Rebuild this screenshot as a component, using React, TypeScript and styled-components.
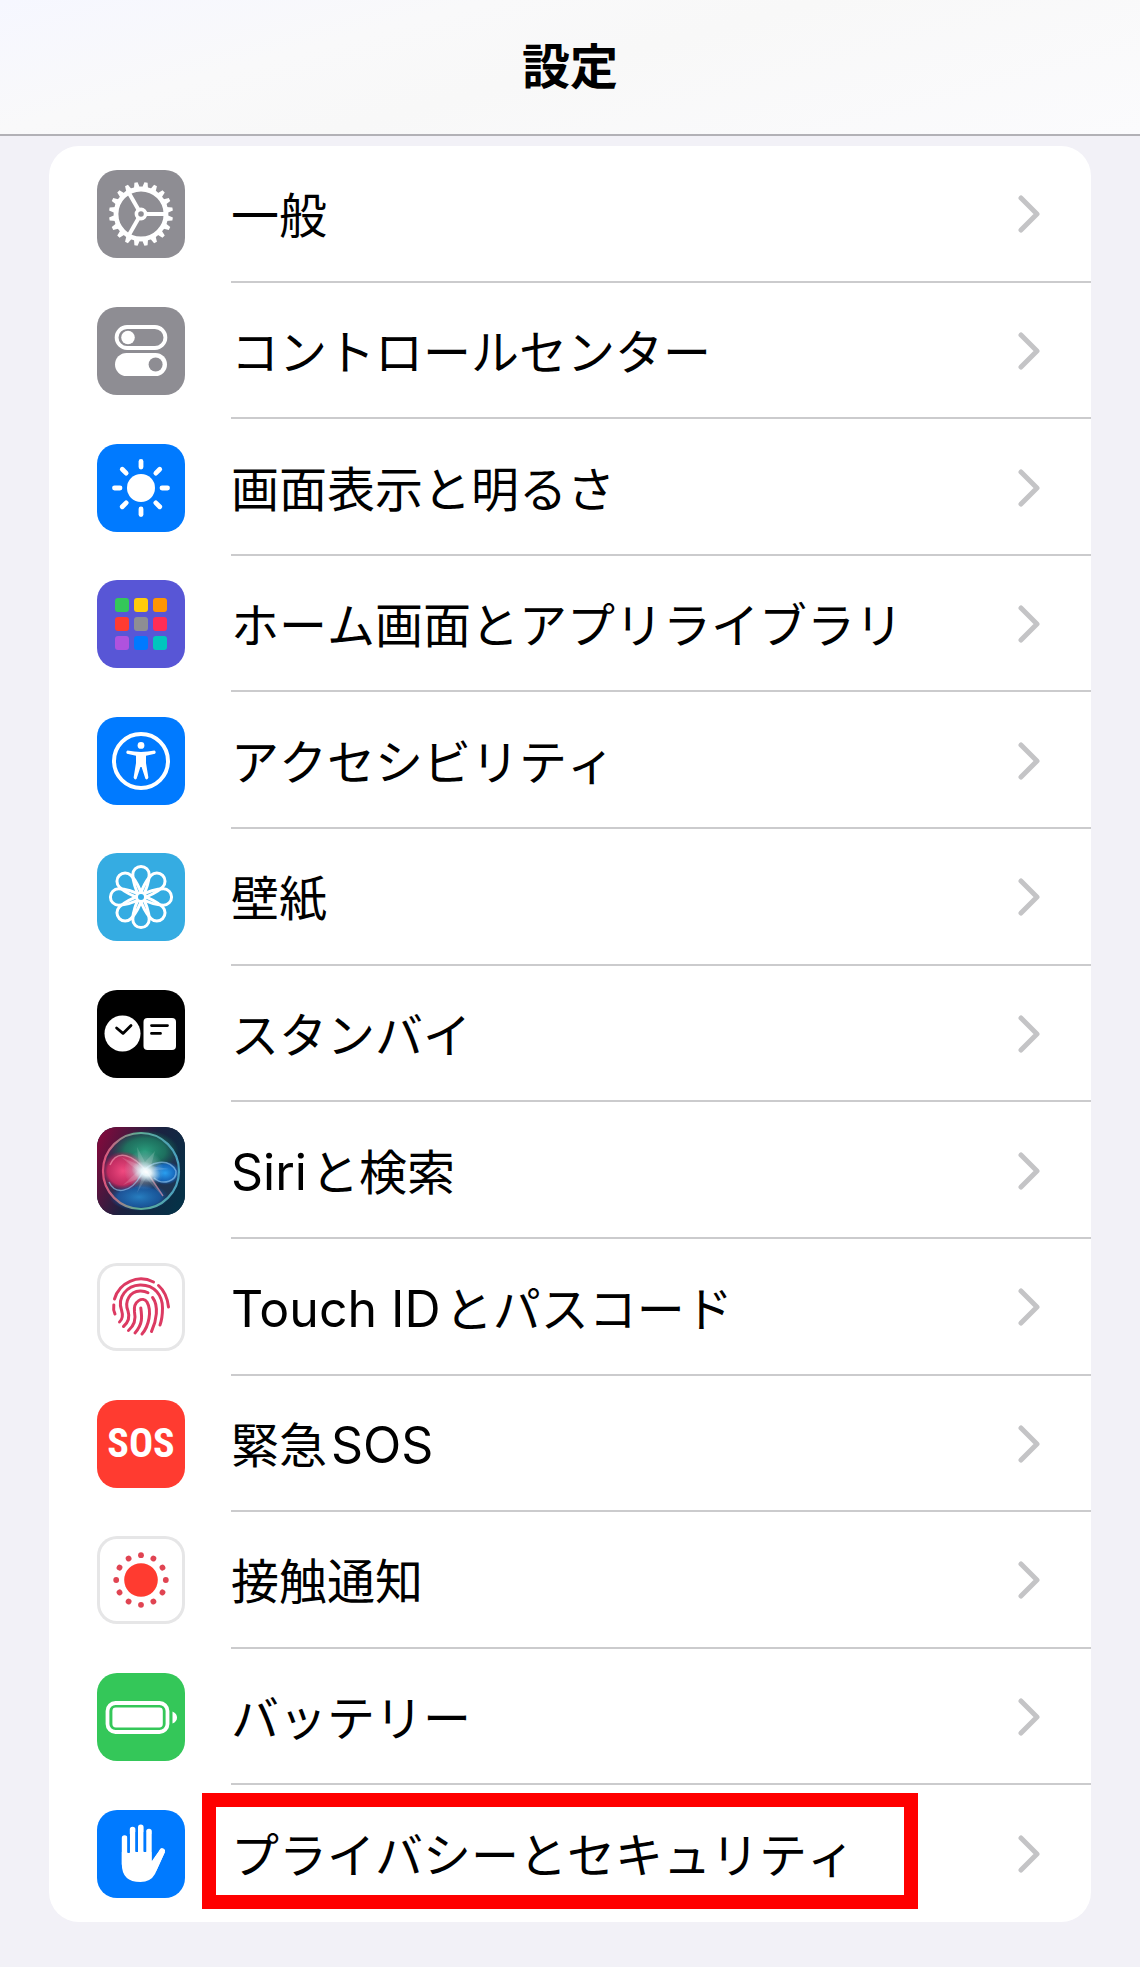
import React from "react";
import styled, { createGlobalStyle, css } from "styled-components";

const GlobalStyle = createGlobalStyle`
  *, *::before, *::after { box-sizing: border-box; }
  body {
    margin: 0;
    background: #f2f1f7;
    color: #000;
    font-family: Inter, "Noto Sans CJK JP", sans-serif;
  }
`;

const Page = styled.div`
  min-height: 100vh;
  display: flex;
  flex-direction: column;
`;

const Header = styled.header`
  height: 136px;
  display: flex;
  align-items: center;
  justify-content: center;
  border-bottom: 2px solid #b2b1b6;
  background: linear-gradient(165deg, #f6f7ff 0%, #f9f9fa 30%, #f8f8f8 50%, #fbfbfd 100%);
`;

const Title = styled.h1`
  margin: 0;
  font-size: 48px;
  line-height: 56px;
  font-weight: 700;
`;

const Main = styled.main`
  flex: 1;
  display: flex;
  padding: 10px 49px 45px;
`;

const Card = styled.ul`
  flex: 1;
  margin: 0;
  padding: 0;
  list-style: none;
  display: grid;
  grid-auto-rows: 1fr;
  border-radius: 30px;
  background: #fff;
`;

const Item = styled.li`
  display: flex;
`;

const RowLink = styled.a`
  flex: 1;
  display: flex;
  align-items: stretch;
  gap: 46px;
  padding-left: 48px;
  color: inherit;
  text-decoration: none;
`;

const Tile = styled.span<{ $bg: string; $outlined?: boolean }>`
  align-self: center;
  flex: none;
  display: flex;
  align-items: center;
  justify-content: center;
  width: 88px;
  height: 88px;
  border-radius: 20px;
  overflow: hidden;
  background: ${(p) => p.$bg};
  ${(p) =>
    p.$outlined &&
    css`
      box-shadow: inset 0 0 0 3px #e6e6e7;
    `}
  svg {
    display: block;
  }
`;

const SosText = styled.span`
  color: #fff;
  font-family: "Roboto Condensed", "Liberation Sans Narrow", Roboto, sans-serif;
  font-size: 40px;
  font-weight: 700;
  line-height: 48px;
`;

const Body = styled.span<{ $last: boolean }>`
  flex: 1;
  display: flex;
  align-items: center;
  justify-content: space-between;
  padding-right: 50px;
  border-bottom: 2px solid ${(p) => (p.$last ? "transparent" : "#cbcbcd")};
`;

const Label = styled.span`
  position: relative;
  padding-top: 6px;
  font-size: 48px;
  line-height: 64px;
  font-weight: 400;
  font-kerning: none;
  white-space: nowrap;
`;

const Latin = styled.span`
  font-size: 50px;
  font-kerning: normal;
  &:first-child:not(:last-child) {
    margin-right: 4px;
  }
  &:last-child:not(:first-child) {
    margin-left: 4px;
  }
`;

const Highlight = styled.span`
  position: absolute;
  inset: -25px -63px -21px -29px;
  border: 14px solid #f00;
  pointer-events: none;
`;

const Svg = ({ children }: { children: React.ReactNode }) => (
  <svg width="88" height="88" viewBox="0 0 88 88" fill="none" aria-hidden="true">
    {children}
  </svg>
);

const around = (n: number, draw: (deg: number) => React.ReactNode) =>
  Array.from({ length: n }, (_, i) => draw((360 / n) * i));

const Gear = () => (
  <Svg>
    <g fill="#fff">
      {around(20, (d) => (
        <path key={d} d="M41 18 L42.4 12 H45.6 L47 18Z" transform={`rotate(${d + 9} 44 44)`} />
      ))}
    </g>
    <circle cx="44" cy="44" r="25" stroke="#fff" strokeWidth="4.8" />
    <circle cx="44" cy="44" r="4.6" stroke="#fff" strokeWidth="3.6" />
    {around(3, (d) => (
      <path key={d} d="M49 44H69" stroke="#fff" strokeWidth="4" transform={`rotate(${d} 44 44)`} />
    ))}
  </Svg>
);

const Toggles = () => (
  <Svg>
    <rect x="19.6" y="20" width="48.8" height="21" rx="10.5" stroke="#fff" strokeWidth="3.8" />
    <circle cx="31" cy="30.5" r="6.8" fill="#fff" />
    <rect x="18" y="46" width="52" height="23" rx="11.5" fill="#fff" />
    <circle cx="58.6" cy="57.5" r="7" fill="#8e8d93" />
  </Svg>
);

const Sun = () => (
  <Svg>
    <circle cx="44" cy="44" r="14" fill="#fff" />
    {around(8, (d) => (
      <path
        key={d}
        d="M44 17.5V23"
        stroke="#fff"
        strokeWidth="4.8"
        strokeLinecap="round"
        transform={`rotate(${d} 44 44)`}
      />
    ))}
  </Svg>
);

const appColors = [
  "#34c759", "#ffcc0a", "#ff9500",
  "#ff3b30", "#8e8e93", "#ff2d55",
  "#af52de", "#007aff", "#00c7be",
];

const AppGrid = () => (
  <Svg>
    {appColors.map((c, i) => (
      <rect key={c} x={18 + (i % 3) * 19} y={18 + Math.floor(i / 3) * 19} width="14" height="14" rx="3" fill={c} />
    ))}
  </Svg>
);

const Accessibility = () => (
  <Svg>
    <circle cx="44" cy="44" r="27" stroke="#fff" strokeWidth="4" />
    <circle cx="44" cy="28.4" r="3.4" fill="#fff" />
    <path
      d="M30.5 33.6 Q44 36.4 57.5 33.6 Q59.6 34.8 58 36.8 L49 38.8 V46 L51.4 60.6 Q50.6 63.4 48.4 61.8 L44.6 50 H43.4 L39.6 61.8 Q37.4 63.4 36.6 60.6 L39 46 V38.8 L30 36.8 Q28.4 34.8 30.5 33.6Z"
      fill="#fff"
    />
  </Svg>
);

const Flower = () => (
  <Svg>
    {around(8, (d) => (
      <path
        key={d}
        d="M44 48 C39.5 39 35.8 31 35.8 21.6 A8.2 8.2 0 0 1 52.2 21.6 C52.2 31 48.5 39 44 48Z"
        stroke="#fff"
        strokeWidth="3"
        transform={`rotate(${d} 44 44)`}
      />
    ))}
    <circle cx="44" cy="44" r="6" fill="#fff" />
    <circle cx="44" cy="44" r="3" fill="#32ade6" />
  </Svg>
);

const StandBy = () => (
  <Svg>
    <circle cx="25.5" cy="43.5" r="18" fill="#fff" />
    <path d="M19.6 38 L26 43.4 L34 35.4" stroke="#000" strokeWidth="2.8" strokeLinecap="round" strokeLinejoin="round" />
    <rect x="46.5" y="28" width="32.5" height="32" rx="4" fill="#fff" />
    <path d="M54.5 35.6H70.5M54.5 43.4H63.5" stroke="#000" strokeWidth="2.8" strokeLinecap="round" />
  </Svg>
);

const Siri = () => (
  <Svg>
    <defs>
      <linearGradient id="siriBg" x1="0" y1="20" x2="88" y2="60" gradientUnits="userSpaceOnUse">
        <stop offset="0" stopColor="#7c0b3c" />
        <stop offset="0.5" stopColor="#1c2140" />
        <stop offset="1" stopColor="#063147" />
      </linearGradient>
      <radialGradient id="siriGreen">
        <stop offset="0" stopColor="#2a9c7c" />
        <stop offset="0.6" stopColor="#1c7f62" stopOpacity="0.8" />
        <stop offset="1" stopColor="#0f6b50" stopOpacity="0" />
      </radialGradient>
      <radialGradient id="siriPink">
        <stop offset="0" stopColor="#f04a80" />
        <stop offset="0.7" stopColor="#d82a63" stopOpacity="0.85" />
        <stop offset="1" stopColor="#a01750" stopOpacity="0" />
      </radialGradient>
      <radialGradient id="siriBlue">
        <stop offset="0" stopColor="#2aa0f0" />
        <stop offset="0.7" stopColor="#1470d0" stopOpacity="0.8" />
        <stop offset="1" stopColor="#0d4ea0" stopOpacity="0" />
      </radialGradient>
      <radialGradient id="siriGlow">
        <stop offset="0" stopColor="#fff" />
        <stop offset="0.35" stopColor="#eefcff" stopOpacity="0.9" />
        <stop offset="1" stopColor="#bfeaf5" stopOpacity="0" />
      </radialGradient>
      <linearGradient id="siriRing" x1="6" y1="44" x2="82" y2="44" gradientUnits="userSpaceOnUse">
        <stop offset="0" stopColor="#e0527c" />
        <stop offset="0.45" stopColor="#5fae94" />
        <stop offset="1" stopColor="#4a9fc0" />
      </linearGradient>
    </defs>
    <rect width="88" height="88" fill="url(#siriBg)" />
    <circle cx="44" cy="44" r="37" fill="#2a3a5c" fillOpacity="0.6" />
    <ellipse cx="48" cy="24" rx="34" ry="21" fill="url(#siriGreen)" />
    <ellipse cx="42" cy="70" rx="30" ry="14" fill="url(#siriBlue)" fillOpacity="0.7" />
    <ellipse cx="26" cy="44" rx="22" ry="20" fill="url(#siriPink)" />
    <ellipse cx="68" cy="46" rx="16" ry="12" fill="url(#siriBlue)" />
    <path d="M12 55 C18 68 34 66 44 48 C53 33 72 31 79 44 C80 54 66 59 57 51" stroke="#8fc5ee" strokeOpacity="0.65" strokeWidth="1.5" />
    <path d="M13 38 C20 22 36 27 50 45 L66 69" stroke="#f9a4b9" strokeOpacity="0.6" strokeWidth="1.4" />
    <circle cx="47" cy="43" r="20" fill="url(#siriGlow)" fillOpacity="0.5" />
    <path d="M50 44 L64 68 L49 51 L40 66 L45 50 L26 58 L41 44 L24 30 L42 38 L40 20 L48 35 L58 24 L54 39 L72 42Z" fill="#fff" fillOpacity="0.16" />
    <ellipse cx="49" cy="45" rx="15" ry="10" fill="url(#siriGlow)" transform="rotate(20 49 45)" />
    <circle cx="44" cy="44" r="38" stroke="url(#siriRing)" strokeWidth="2.2" />
  </Svg>
);

const Fingerprint = () => (
  <Svg>
    <g stroke="#dc3a62" strokeWidth="3" strokeLinecap="round">
      <path d="M17.5 36 A27.5 27.5 0 0 1 56.5 19" />
      <path d="M61.5 22.5 Q70 30 71.5 44" />
      <path d="M16.8 42 Q16 47 18 51" />
      <path d="M22.5 59 Q27 55 24.5 47 C20 34 30 22.5 43 22 C58 21.6 65.5 33 65.5 45 Q65.5 55 63 62" />
      <path d="M26.5 63.5 Q34 57 31 48 C27 38 33 28.5 43 28 Q47.5 27.8 51 29.8" />
      <path d="M55.6 34.5 C62 43 59.5 58 54.5 68.5" />
      <path d="M31.5 67.5 Q40 60 37.5 49 C36 38 46 33 50 39 C55 48 52 63 45 71" />
      <path d="M38 70 C46 61 45 54 43.8 45" />
    </g>
  </Svg>
);

const Exposure = () => (
  <Svg>
    <circle cx="44" cy="44" r="16.8" fill="#ff3b30" />
    {around(12, (d) => (
      <circle key={d} cx="44" cy="19.2" r="2.9" fill="#e04452" transform={`rotate(${d} 44 44)`} />
    ))}
  </Svg>
);

const Battery = () => (
  <Svg>
    <rect x="10.5" y="30" width="60" height="29" rx="8" stroke="#fff" strokeWidth="3.8" />
    <rect x="15.4" y="34.5" width="50.4" height="20" rx="3.4" fill="#fff" />
    <path d="M75.5 38.5 Q80 40.5 80 44.5 T75.5 50.5Z" fill="#fff" />
  </Svg>
);

const Hand = () => (
  <Svg>
    <g stroke="#fff" strokeWidth="5.6" strokeLinecap="round">
      <path d="M27.6 28V54M35.6 19.6V48M43.8 17.4V48M52 21.6V52" />
      <path d="M65.2 41 L57 59" />
    </g>
    <path d="M24.8 42 H54.8 V50.5 L62.6 40 L68 42 L58 64 Q53.5 72 43.5 72 Q24.8 72 24.8 54Z" fill="#fff" />
    <path d="M31.6 24V43M39.7 22V41M47.9 22V41" stroke="#007aff" strokeWidth="2.4" />
    <path d="M54.9 24V51 L62.2 40 L59.5 30Z" fill="#007aff" />
  </Svg>
);

const Chevron = () => (
  <svg width="24" height="40" viewBox="0 0 24 40" fill="none" aria-hidden="true">
    <path d="M4 5 L20 21 L4 37" stroke="#c4c4c6" strokeWidth="5" strokeLinecap="round" strokeLinejoin="round" />
  </svg>
);

type Entry = {
  label: React.ReactNode;
  bg: string;
  icon: React.ReactNode;
  outlined?: boolean;
  highlighted?: boolean;
};

const entries: Entry[] = [
  { label: "一般", bg: "#8e8d93", icon: <Gear /> },
  { label: "コントロールセンター", bg: "#8e8d93", icon: <Toggles /> },
  { label: "画面表示と明るさ", bg: "#007aff", icon: <Sun /> },
  { label: "ホーム画面とアプリライブラリ", bg: "#5856d6", icon: <AppGrid /> },
  { label: "アクセシビリティ", bg: "#007aff", icon: <Accessibility /> },
  { label: "壁紙", bg: "#35ace2", icon: <Flower /> },
  { label: "スタンバイ", bg: "#000", icon: <StandBy /> },
  { label: <><Latin>Siri</Latin><span>と検索</span></>, bg: "#10203c", icon: <Siri /> },
  { label: <><Latin>Touch ID</Latin><span>とパスコード</span></>, bg: "#fff", icon: <Fingerprint />, outlined: true },
  { label: <><span>緊急</span><Latin>SOS</Latin></>, bg: "#ff3b30", icon: <SosText aria-hidden="true">SOS</SosText> },
  { label: "接触通知", bg: "#fff", icon: <Exposure />, outlined: true },
  { label: "バッテリー", bg: "#34c759", icon: <Battery /> },
  { label: "プライバシーとセキュリティ", bg: "#007aff", icon: <Hand />, highlighted: true },
];

export default function App() {
  return (
    <Page>
      <GlobalStyle />
      <Header>
        <Title>設定</Title>
      </Header>
      <Main>
        <Card>
          {entries.map((e, i) => (
            <Item key={i}>
              <RowLink href="#">
                <Tile $bg={e.bg} $outlined={e.outlined}>
                  {e.icon}
                </Tile>
                <Body $last={i === entries.length - 1}>
                  <Label>
                    {e.label}
                    {e.highlighted && <Highlight />}
                  </Label>
                  <Chevron />
                </Body>
              </RowLink>
            </Item>
          ))}
        </Card>
      </Main>
    </Page>
  );
}
